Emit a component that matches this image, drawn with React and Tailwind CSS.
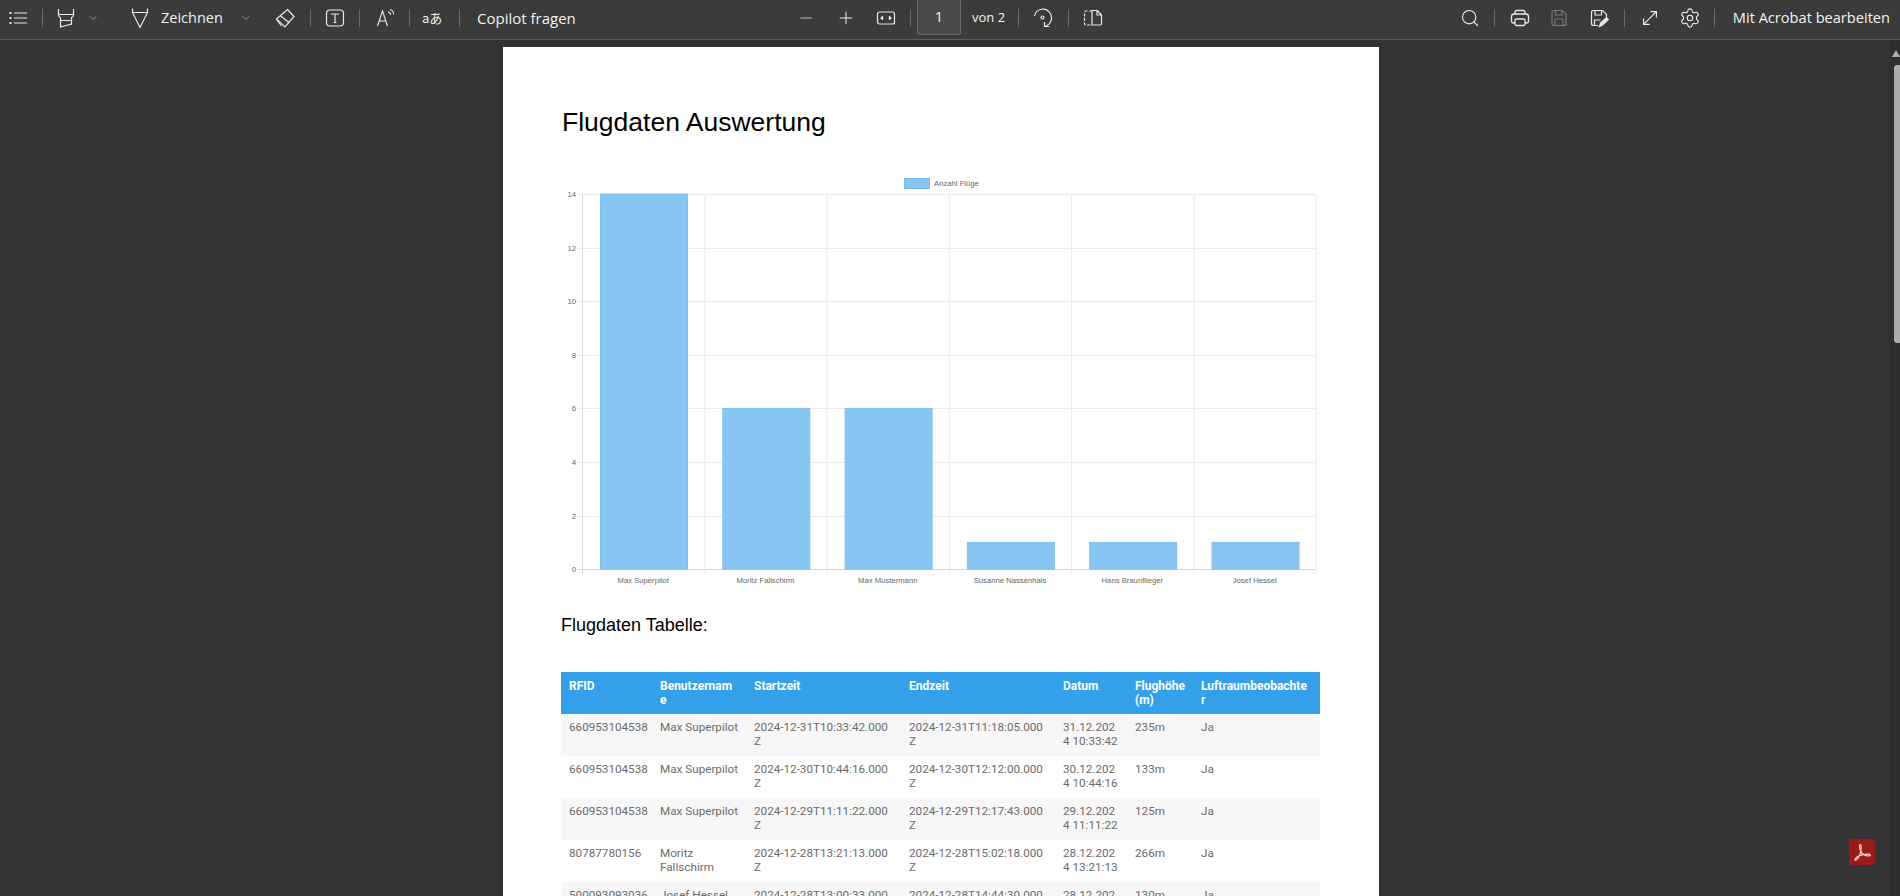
import { ChevronDown, Minus, Plus, Search, Settings, MoveDiagonal } from "lucide-react";

const Sep = ({ className = "" }) => <div className={`w-px h-[18px] bg-[#6a6a6a] shrink-0 ${className}`}></div>;

const ListIcon = () => (
  <svg width="20" height="20" viewBox="0 0 20 20" fill="none" stroke="#e8e8e8" strokeWidth="1.2">
    <path d="M6 5h13M6 10h13M6 15h13" />
    <path d="M1.5 5h2M1.5 10h2M1.5 15h2" strokeWidth="1.8" />
  </svg>
);

const MarkerIcon = () => (
  <svg width="20" height="22" viewBox="0 0 20 22" fill="none" stroke="#e8e8e8" strokeWidth="1.2">
    <path d="M2.5 2v6.5c0 1 1 1.5 2 2V20l11-3v-6.5c1-.5 2-1 2-2V2" />
    <path d="M2.5 7.5h15M4.5 13.5h11" />
  </svg>
);

const DrawIcon = () => (
  <svg width="20" height="22" viewBox="0 0 20 22" fill="none" stroke="#e8e8e8" strokeWidth="1.2">
    <path d="M2.5 1.5v4h15v-4M2.5 5.5L10 20.5l7.5-15" />
  </svg>
);

const EraserIcon = () => (
  <svg width="20" height="20" viewBox="0 0 20 20" fill="none" stroke="#e8e8e8" strokeWidth="1.2">
    <path d="M12.5 1.5l6.500 7-9 10.500-8.500-8z" />
    <path d="M1.5 11.500l5 6.500M5 7.500l9 7" />
  </svg>
);

const TextBoxIcon = () => (
  <svg width="20" height="20" viewBox="0 0 20 20" fill="none" stroke="#e8e8e8" strokeWidth="1.2">
    <rect x="1.5" y="2" width="17" height="16" rx="3.5" />
    <path d="M6 6h8M10 6v8.5M8.5 14.5h3" />
  </svg>
);

const ReadAloudIcon = () => (
  <svg width="22" height="20" viewBox="0 0 22 20" fill="none" stroke="#e8e8e8" strokeWidth="1.1">
    <path d="M2.5 18L7.5 3l5 15M4.3 13h6.4" />
    <path d="M13 4c1.5 0 2.5 1.5 2.8 3M15 1.5c2 .5 3.500 2.500 3.800 5" />
  </svg>
);

const FitWidthIcon = () => (
  <svg width="20" height="20" viewBox="0 0 20 20" fill="none" stroke="#e8e8e8" strokeWidth="1.2">
    <rect x="1.5" y="4" width="17" height="12" rx="2" />
    <path d="M5 10h2.5M15 10h-2.5" />
    <path d="M7 8.3L5 10l2 1.7M13 8.3L15 10l-2 1.7" fill="#e8e8e8" />
  </svg>
);

const RotateIcon = () => (
  <svg width="20" height="20" viewBox="0 0 20 20" fill="none" stroke="#e8e8e8" strokeWidth="1.2">
    <path d="M1.5 8A8.5 8.5 0 0 1 17 5a8.500 8.500 0 0 1-4.500 13" />
    <circle cx="9.5" cy="9.5" r="1.5" />
    <path d="M11.5 14v4.5H16" />
  </svg>
);

const PageViewIcon = () => (
  <svg width="20" height="20" viewBox="0 0 20 20" fill="none" stroke="#e8e8e8" strokeWidth="1.2">
    <path d="M9 3H3q-1.5 0-1.5 1.5v11Q1.5 17 3 17h6" strokeDasharray="3 1.5" />
    <path d="M9 2.5h5.5l4 4.5v8.5q0 1.5-1.5 1.5H9zM14 2.500V7h4.500" />
  </svg>
);

const PrintIcon = () => (
  <svg width="20" height="20" viewBox="0 0 20 20" fill="none" stroke="#e8e8e8" strokeWidth="1.3">
    <path d="M5 6V4.5Q5 2.5 7 2.5h6q2 0 2 2V6" />
    <path d="M5 15H3.5q-2 0-2-2V8.500q0-2.500 2.500-2.500h12q2.500 0 2.500 2.500V13q0 2-2 2H15" />
    <rect x="5" y="11" width="10" height="6.5" rx="1.5" />
  </svg>
);

const SaveIcon = ({ color = "#e8e8e8" }) => (
  <svg width="20" height="20" viewBox="0 0 20 20" fill="none" stroke={color} strokeWidth="1.2">
    <path d="M4.5 2.500h9l3.500 3.500v9.500q0 2-2 2h-10q-2 0-2-2v-11q0-2 1.500-2z" />
    <path d="M6.5 2.500V7h6.500V2.500M6 17.500V12q0-1 1-1h6q1 0 1 1v5.500" />
  </svg>
);

const SaveAsIcon = () => (
  <svg width="20" height="20" viewBox="0 0 20 20" fill="none" stroke="#e8e8e8" strokeWidth="1.2">
    <path d="M9 17.5H4.5q-2 0-2-2v-11q0-2 2-2h9l4 4V9" />
    <path d="M6 2.5V7h6.5V2.5M5.5 17v-5h6" />
    <path d="M10.5 18.5l1-3.500 6-5.500 2 2-6 5.500z" fill="#e8e8e8" />
  </svg>
);

const Toolbar = () => (
  <header className="h-10 shrink-0 bg-[#3b3b3b] border-b border-[#5c5c5c] pb-[3px] flex items-center text-[#f2f2f2] text-[14.5px] font-['Open_Sans',sans-serif]">
    {/* Linke Gruppe */}
    <div className="flex items-center w-[790px] shrink-0 pl-[8px]">
      <ListIcon />
      <Sep className="ml-[14px]" />
      <div className="ml-[13px]"><MarkerIcon /></div>
      <ChevronDown size={12} strokeWidth={1.2} className="ml-[11px] text-[#cfcfcf]" />
      <div className="ml-[31px]"><DrawIcon /></div>
      <span className="ml-[11px] w-[62px] whitespace-nowrap">Zeichnen</span>
      <ChevronDown size={12} strokeWidth={1.2} className="ml-[17px] text-[#cfcfcf]" />
      <div className="ml-[23px]"><EraserIcon /></div>
      <Sep className="ml-[15px]" />
      <div className="ml-[14px]"><TextBoxIcon /></div>
      <Sep className="ml-[14px]" />
      <div className="ml-[15px]"><ReadAloudIcon /></div>
      <Sep className="ml-[12px]" />
      <span className="ml-[12px] w-[22px] text-[13px] whitespace-nowrap font-['Noto_Sans_CJK_JP','Open_Sans',sans-serif]">aあ</span>
      <Sep className="ml-[15px]" />
      <span className="ml-[17px] text-[15px] whitespace-nowrap">Copilot fragen</span>
    </div>

    {/* Mitte: Zoom und Seite */}
    <div className="flex items-center self-stretch ml-[7px] shrink-0">
      <Minus size={18} strokeWidth={1.2} className="text-[#cfcfcf]" />
      <Plus size={20} strokeWidth={1.2} className="ml-[21px]" />
      <div className="ml-[20px]"><FitWidthIcon /></div>
      <Sep className="ml-[14px]" />
      <div className="ml-[6px] w-[44px] h-[35px] self-start bg-[#4a4a4a] border border-t-0 border-[#6a6a6a] rounded-b-[3px] flex items-center justify-center">1</div>
      <span className="ml-[11px] w-[33px] text-[13px] whitespace-nowrap">von 2</span>
      <Sep className="ml-[13px]" />
      <div className="ml-[14px]"><RotateIcon /></div>
      <Sep className="ml-[15px]" />
      <div className="ml-[14px]"><PageViewIcon /></div>
    </div>

    {/* Rechte Gruppe */}
    <div className="flex items-center ml-auto pr-[10px] shrink-0">
      <Search size={20} strokeWidth={1.3} />
      <Sep className="ml-[14px]" />
      <div className="ml-[15px]"><PrintIcon /></div>
      <div className="ml-[19px]"><SaveIcon color="#7a7a7a" /></div>
      <div className="ml-[20px]"><SaveAsIcon /></div>
      <Sep className="ml-[15px]" />
      <MoveDiagonal size={22} strokeWidth={1.2} className="ml-[14px]" />
      <Settings size={22} strokeWidth={1.2} className="ml-[18px]" />
      <Sep className="ml-[13px]" />
      <span className="ml-[18px] text-[14.6px] whitespace-nowrap">Mit Acrobat bearbeiten</span>
    </div>
  </header>
);

const balken = [
  { name: "Max Superpilot", wert: 14 },
  { name: "Moritz Fallschirm", wert: 6 },
  { name: "Max Mustermann", wert: 6 },
  { name: "Susanne Nassenhals", wert: 1 },
  { name: "Hans Braunflieger", wert: 1 },
  { name: "Josef Hessel", wert: 1 },
];

const Chart = () => {
  const links = 21;
  const spalte = 122.3;
  const oben = 22;
  const schritt = 26.8;
  const y = (w) => oben + (14 - w) * schritt;
  return (
    <svg width="759" height="441" viewBox="0 0 759 441" className="block" fontFamily="Liberation Sans, sans-serif">
      {/* Legende */}
      <rect x="343.5" y="6.5" width="25" height="10" fill="#87c6f3" stroke="#78bcee" />
      <text x="373" y="14" fontSize="7.7" fill="#666">Anzahl Flüge</text>

      {/* Raster */}
      {[0, 2, 4, 6, 8, 10, 12, 14].map((w) => (
        <g key={w}>
          <line x1={links - 5} x2={links + spalte * 6} y1={Math.round(y(w)) + 0.5} y2={Math.round(y(w)) + 0.5} stroke={w === 0 ? "#d6d6d6" : "#ebebeb"} />
          <text x={links - 6} y={y(w) + 3} textAnchor="end" fontSize="7.7" fill="#666">{w}</text>
        </g>
      ))}
      {[0, 1, 2, 3, 4, 5, 6].map((i) => (
        <line key={i} x1={links + i * spalte + 0.5} x2={links + i * spalte + 0.5} y1={oben} y2={y(0) + 5} stroke={i === 0 ? "#d6d6d6" : "#ebebeb"} />
      ))}

      {/* Balken */}
      {balken.map((b, i) => (
        <g key={b.name}>
          <rect x={links + i * spalte + 18.5} y={y(b.wert)} width="87" height={y(0) - y(b.wert)} fill="#87c6f3" stroke="#7fc0f0" />
          <text x={links + i * spalte + spalte / 2} y={y(0) + 14} textAnchor="middle" fontSize="7.7" fill="#666">{b.name}</text>
        </g>
      ))}
    </svg>
  );
};

const zeilen = [
  ["660953104538", "Max Superpilot", "2024-12-31T10:33:42.000\nZ", "2024-12-31T11:18:05.000\nZ", "31.12.202\n4 10:33:42", "235m", "Ja"],
  ["660953104538", "Max Superpilot", "2024-12-30T10:44:16.000\nZ", "2024-12-30T12:12:00.000\nZ", "30.12.202\n4 10:44:16", "133m", "Ja"],
  ["660953104538", "Max Superpilot", "2024-12-29T11:11:22.000\nZ", "2024-12-29T12:17:43.000\nZ", "29.12.202\n4 11:11:22", "125m", "Ja"],
  ["80787780156", "Moritz\nFallschirm", "2024-12-28T13:21:13.000\nZ", "2024-12-28T15:02:18.000\nZ", "28.12.202\n4 13:21:13", "266m", "Ja"],
  ["500093093036", "Josef Hessel", "2024-12-28T13:00:33.000\nZ", "2024-12-28T14:44:30.000\nZ", "28.12.202\n4 13:00:33", "130m", "Ja"],
];

const spalten = ["RFID", "Benutzernam\ne", "Startzeit", "Endzeit", "Datum", "Flughöhe\n(m)", "Luftraumbeobachte\nr"];
const breiten = ["w-[91px]", "w-[94px]", "w-[155px]", "w-[154px]", "w-[72px]", "w-[66px]", "w-[127px]"];

const FlugTabelle = () => (
  <table className="table-fixed w-[759px] border-collapse font-['Roboto',sans-serif] text-[11.7px] leading-[14px] whitespace-pre">
    <thead>
      <tr className="bg-[#34a0ea] text-white text-left h-[42px]">
        {spalten.map((s, i) => (
          <th key={s} className={`${breiten[i]} pl-2 py-[7px] align-top font-bold text-[12px]`}>{s}</th>
        ))}
      </tr>
    </thead>
    <tbody>
      {zeilen.map((z, n) => (
        <tr key={n} className={`h-[42px] text-[#6b6b6b] ${n % 2 === 0 ? "bg-[#f7f7f7]" : "bg-white"}`}>
          {z.map((c, i) => (
            <td key={i} className="pl-2 py-[6px] align-top">{c}</td>
          ))}
        </tr>
      ))}
    </tbody>
  </table>
);

const AcrobatBadge = () => (
  <div className="absolute right-[25px] bottom-[31px] w-[26px] h-[26px] rounded-[3px] bg-[#9b1c16] flex items-center justify-center">
    <svg width="20" height="20" viewBox="0 0 20 20" fill="none" stroke="#eadada" strokeWidth="1.2">
      <path d="M8.5 2.5c-1.5 0-1.2 3 .3 6.5 1.5 3.500 3.500 5 8 5 2 0 2-1.800-.3-1.800-3.500 0-9 1-12 3.300-2 1.500-2 3-.5 2.500 2-.6 4.500-6 5-10.500.2-2.500 0-5-.5-5z" />
    </svg>
  </div>
);

const Scrollbar = () => (
  <aside className="w-[18px] shrink-0 flex justify-end">
    <div className="w-[10px] bg-[#2e2e2e] flex flex-col items-end">
      <div className="mt-[10px] w-0 h-0 border-x-[4px] border-x-transparent border-b-[7px] border-b-[#b0b0b0]"></div>
      <div className="mt-[8px] w-[6px] h-[278px] bg-[#ababab] rounded-l-[3px]"></div>
    </div>
  </aside>
);

export default function App() {
  return (
    <div className="h-[896px] w-[1900px] overflow-hidden flex flex-col bg-[#333333]">
      <Toolbar />
      <main className="relative flex-1 overflow-hidden flex">
        <div className="flex-1 flex justify-center overflow-hidden">
          <div className="w-[876px] h-[1240px] mt-[7px] bg-white pl-[58px] pr-[59px] font-['Liberation_Sans',sans-serif] shrink-0">
            <h1 className="text-[26.5px] leading-[32px] text-black pt-[59px] pl-px box-content">Flugdaten Auswertung</h1>
            <div className="mt-[34px]">
              <Chart />
            </div>
            <h2 className="text-[18px] leading-[24px] text-black">Flugdaten Tabelle:</h2>
            <div className="mt-[35px]">
              <FlugTabelle />
            </div>
          </div>
        </div>
        <Scrollbar />
        <AcrobatBadge />
      </main>
    </div>
  );
}
